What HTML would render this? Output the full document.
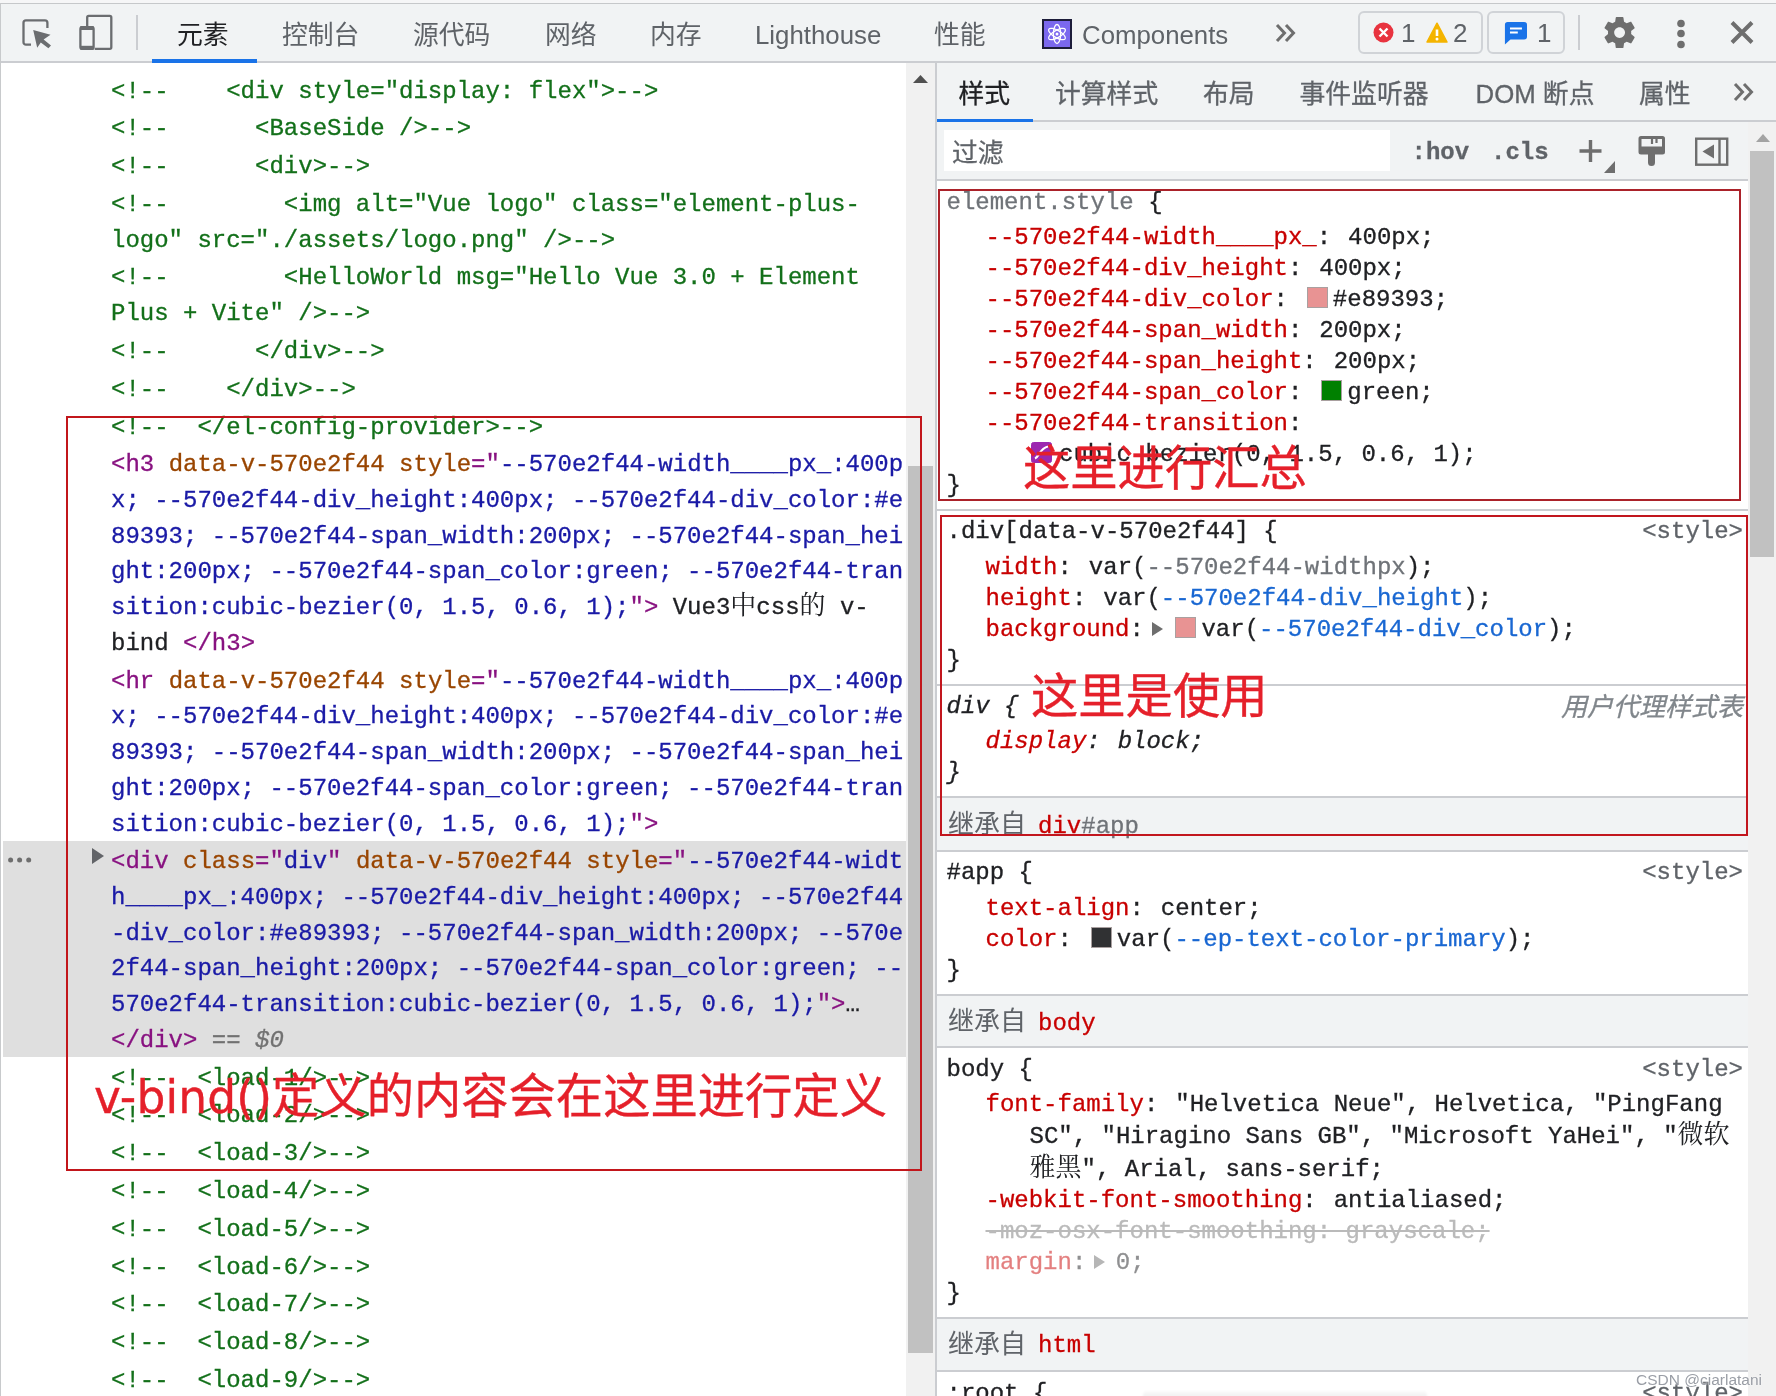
<!DOCTYPE html>
<html lang="zh-CN">
<head>
<meta charset="utf-8">
<title>DevTools</title>
<style>
html,body{margin:0;padding:0;}
body{width:1776px;height:1396px;overflow:hidden;position:relative;background:#fff;
  font-family:"Liberation Sans","Noto Sans CJK SC",sans-serif;color:#202124;}
.abs{position:absolute;}
/* ---------- top toolbar ---------- */
#topbar{left:0;top:0;width:1776px;height:61px;background:#f1f3f4;border-bottom:2px solid #cbcdd1;}
#topline{left:0;top:3px;width:1776px;height:1px;background:#c6c8ca;}
#topwhite{left:0;top:0;width:1776px;height:3px;background:#f6f6f7;}
#leftline{left:0;top:3px;width:1px;height:1393px;background:#c8cacc;}
.tab{position:absolute;top:14.700px;height:40px;line-height:40px;font-size:25.8px;color:#5f6368;white-space:nowrap;}
.tab.on{color:#202124;}
.vdiv{position:absolute;width:2px;background:#cbcdd1;}
.badge{position:absolute;top:11px;height:43px;border:2px solid #d0d3d7;border-radius:6px;box-sizing:border-box;}
.badge span{position:absolute;top:0;font-size:26px;line-height:40px;color:#5f6368;}
/* ---------- left DOM tree ---------- */
#left{left:0;top:63px;width:906px;height:1333px;background:#fff;overflow:hidden;}
.mono{font-family:"Liberation Mono","Noto Sans CJK SC",monospace;font-size:24px;-webkit-text-stroke:0.3px currentColor;}
#tree{position:absolute;left:0;top:9.300px;width:906px;}
.node{position:relative;padding:1.300px 0 0.800px 111px;white-space:pre;line-height:35.7px;}
.node.sel{margin-left:3px;padding-left:108px;}
#selbg{position:absolute;left:3px;top:778px;width:903px;height:215.800px;background:#dfdfdf;}
.c{color:#13701a;}
.t{color:#881280;}
.an{color:#994500;}
.av{color:#1a1aa6;}
.tx{color:#202124;}
.eq{color:#727272;font-style:italic;}
.dots{position:absolute;left:5px;top:13.700px;width:26px;height:6px;}
.arrow{position:absolute;left:89px;top:5px;width:0;height:0;border-left:12px solid #626468;border-top:8px solid transparent;border-bottom:8px solid transparent;}
#lscroll{left:906px;top:63px;width:29px;height:1333px;background:#f1f1f1;}
#lthumb{left:908px;top:466px;width:25px;height:887px;background:#c1c1c1;}
#vsplit{left:935px;top:63px;width:2px;height:1333px;background:#cbcdd1;}
/* ---------- right styles pane ---------- */
#right{left:937px;top:63px;width:839px;height:1333px;background:#fff;overflow:hidden;}
.p{color:#c80000;}
.v{color:#202124;}
.lk{color:#1967d2;}
.g{color:#6f7378;}
.sw{display:inline-block;width:19px;height:19px;border:1px solid #a9a0a0;vertical-align:-2px;margin:0 5px 0 2px;box-sizing:content-box;}
.line{position:absolute;white-space:pre;line-height:32px;height:32px;left:9.5px;}
.src{position:absolute;white-space:pre;line-height:32px;height:32px;right:33px;color:#5f6368;}
.col{margin-right:2.500px;}
.sep{position:absolute;left:0;width:811px;background:#f1f3f4;border-top:2px solid #cbcdd1;border-bottom:2px solid #cbcdd1;box-sizing:border-box;}
.hr{position:absolute;left:0;width:811px;height:2px;background:#cbcdd1;}
.red{position:absolute;border:2px solid #e0202a;box-sizing:border-box;}
.note{position:absolute;color:#e5202a;white-space:nowrap;font-size:47.300px;font-weight:400;-webkit-text-stroke:0.35px #e5202a;line-height:56px;font-family:"Liberation Sans","Noto Sans CJK SC",sans-serif;}

.ind{padding-left:39px;}
.ind2{padding-left:83px;}
.it{font-style:italic;}
.tri{display:inline-block;width:0;height:0;border-left:11px solid #6e6e6e;border-top:7px solid transparent;border-bottom:7px solid transparent;margin:0 10.500px 0 5.500px;vertical-align:0px;}
.hov{font-family:"Liberation Mono",monospace;font-weight:bold;font-size:24px;line-height:40px;color:#5f6368;}
.inh{position:absolute;left:11px;white-space:pre;line-height:32px;height:32px;font-size:24px;}
.inhl{position:relative;top:0.5px;line-height:0;margin-right:-2.400px;-webkit-text-stroke:0;font-family:"Liberation Sans","Noto Sans CJK SC",sans-serif;font-size:26px;color:#5f6368;}
.strike{color:#bababa;text-decoration:line-through;}
.dim{opacity:.5;}
.ua{font-style:italic;font-family:"Liberation Sans","Noto Sans CJK SC",sans-serif;font-size:26px;color:#80868b;}
.bez{background:#9c27b0;border-color:#9c27b0;border-radius:2.500px;margin:0 7.500px 0 1px;position:relative;}
.cjk{font-family:"Noto Serif CJK SC",serif;font-size:26px;line-height:0;-webkit-text-stroke:0;}
#right .tab{font-family:"Liberation Sans","Noto Sans CJK SC",sans-serif;}
</style>
</head>
<body>
<div id="wrap" style="position:absolute;left:0;top:0;width:1776px;height:1396px;will-change:transform">
<div id="topbar" class="abs"></div>
<div id="topwhite" class="abs"></div>
<div id="topline" class="abs"></div>
<!-- inspect + device icons -->
<svg class="abs" style="left:0;top:0" width="140" height="62" viewBox="0 0 140 62">
  <path d="M31 44.700H26a2.500 2.500 0 0 1-2.500-2.500V22.800a2.500 2.500 0 0 1 2.500-2.500H44.900a2.500 2.500 0 0 1 2.500 2.500V28" fill="none" stroke="#6b6d70" stroke-width="2.300"/>
  <path d="M33.200 29.900L50.500 34.800 43.600 39.600 51 45.400 48.400 48.200 40.800 42.600 37.200 47.800z" fill="#6b6d70"/>
  <path d="M87.200 26V17.400a1.500 1.500 0 0 1 1.500-1.500H109.800a1.500 1.500 0 0 1 1.500 1.500V47.300a1.500 1.500 0 0 1-1.500 1.500H94.700" fill="none" stroke="#6b6d70" stroke-width="2.300"/>
  <rect x="80.400" y="27.100" width="13.200" height="21.700" rx="1.800" fill="none" stroke="#6b6d70" stroke-width="2.300"/>
  <rect x="80.400" y="26" width="13.200" height="4" fill="#6b6d70"/>
  <rect x="80.400" y="45.800" width="13.200" height="4.100" fill="#6b6d70"/>
</svg>
<div class="vdiv" style="left:136px;top:15px;height:35px"></div>
<div class="tab on" style="left:177px">元素</div>
<div class="abs" style="left:152px;top:59px;width:105px;height:4px;background:#1a73e8"></div>
<div class="tab" style="left:282px">控制台</div>
<div class="tab" style="left:413px">源代码</div>
<div class="tab" style="left:545px">网络</div>
<div class="tab" style="left:650px">内存</div>
<div class="tab" style="left:755px">Lighthouse</div>
<div class="tab" style="left:934px">性能</div>
<!-- react icon -->
<svg class="abs" style="left:1042px;top:19px" width="30" height="30" viewBox="0 0 30 30">
  <rect x="1" y="1" width="28" height="28" fill="#7b68ee" stroke="#1d1d3a" stroke-width="2"/>
  <g fill="none" stroke="#fff" stroke-width="1.300">
    <ellipse cx="15" cy="15" rx="3.600" ry="9.500"/>
    <ellipse cx="15" cy="15" rx="3.600" ry="9.500" transform="rotate(60 15 15)"/>
    <ellipse cx="15" cy="15" rx="3.600" ry="9.500" transform="rotate(120 15 15)"/>
  </g>
  <circle cx="15" cy="15" r="1.500" fill="#fff"/>
</svg>
<div class="tab" style="left:1082px">Components</div>
<svg class="abs" style="left:1274px;top:22px" width="24" height="22" viewBox="0 0 24 22">
  <path d="M3 3l7.5 8L3 19M12 3l7.5 8-7.5 8" fill="none" stroke="#6e6e6e" stroke-width="3"/>
</svg>
<!-- badges -->
<div class="badge" style="left:1358px;width:125px">
  <svg style="position:absolute;left:13px;top:9px" width="21" height="21" viewBox="0 0 21 21"><circle cx="10.5" cy="10.5" r="10" fill="#e8333f"/><path d="M6.5 6.5l8 8M14.500 6.5l-8 8" stroke="#fff" stroke-width="2.4"/></svg>
  <span style="left:41px">1</span>
  <svg style="position:absolute;left:66px;top:9px" width="22" height="21" viewBox="0 0 22 21"><path d="M11 1.2L21 20H1z" fill="#f4b400" stroke="#f4b400" stroke-width="1.5" stroke-linejoin="round"/><path d="M11 7.5v6.500" stroke="#fff" stroke-width="2.6"/><circle cx="11" cy="17" r="1.5" fill="#fff"/></svg>
  <span style="left:93px">2</span>
</div>
<div class="badge" style="left:1487px;width:78px">
  <svg style="position:absolute;left:15px;top:8px" width="23" height="24" viewBox="0 0 25 26"><path d="M4 1h18a3 3 0 0 1 3 3v13a3 3 0 0 1-3 3H7l-6 5.500V4a3 3 0 0 1 3-3z" fill="#1a73e8"/><path d="M6.500 8h13M6.500 12.500h8.500" stroke="#fff" stroke-width="2.2"/></svg>
  <span style="left:48px">1</span>
</div>
<div class="vdiv" style="left:1578px;top:15px;height:35px"></div>
<!-- gear -->
<svg class="abs" style="left:1600.900px;top:13.900px" width="37.200" height="37.200" viewBox="0 0 24 24">
  <path fill="#6e6e6e" d="M19.43 12.980c.04-.32.070-.64.070-.98s-.03-.66-.07-.98l2.110-1.650c.19-.15.240-.42.120-.64l-2-3.460c-.12-.22-.39-.3-.61-.22l-2.490 1c-.52-.4-1.080-.73-1.690-.98l-.38-2.650C14.460 2.180 14.250 2 14 2h-4c-.25 0-.46.180-.49.420l-.38 2.650c-.61.250-1.170.59-1.690.98l-2.490-1c-.23-.09-.49 0-.61.220l-2 3.460c-.13.220-.07.490.12.640l2.110 1.650c-.04.320-.07.650-.07.980s.03.660.07.980l-2.110 1.650c-.19.150-.24.420-.12.640l2 3.460c.12.220.39.300.61.220l2.490-1c.52.400 1.080.73 1.690.98l.38 2.650c.03.240.24.420.49.420h4c.25 0 .46-.18.490-.42l.38-2.650c.61-.25 1.170-.59 1.690-.98l2.490 1c.23.090.49 0 .61-.22l2-3.460c.12-.22.070-.49-.12-.64l-2.110-1.650zM12 15.500c-1.930 0-3.500-1.570-3.500-3.500s1.570-3.500 3.500-3.500 3.500 1.570 3.500 3.500-1.570 3.500-3.500 3.500z"/>
</svg>
<!-- kebab -->
<svg class="abs" style="left:1676px;top:18px" width="10" height="32" viewBox="0 0 10 32"><circle cx="5" cy="5.500" r="3.800" fill="#6e6e6e"/><circle cx="5" cy="15.500" r="3.800" fill="#6e6e6e"/><circle cx="5" cy="26.500" r="3.800" fill="#6e6e6e"/></svg>
<!-- close -->
<svg class="abs" style="left:1729px;top:20px" width="26" height="25" viewBox="0 0 26 25"><path d="M3 2.500l20 20M23 2.500l-20 20" stroke="#6e6e6e" stroke-width="4"/></svg>
<div id="left" class="abs mono"><div id="selbg"></div><div id="tree">
<div class="node"><span class="c">&lt;!--    &lt;div style=&quot;display: flex&quot;&gt;--&gt;</span></div>
<div class="node"><span class="c">&lt;!--      &lt;BaseSide /&gt;--&gt;</span></div>
<div class="node"><span class="c">&lt;!--      &lt;div&gt;--&gt;</span></div>
<div class="node"><span class="c">&lt;!--        &lt;img alt=&quot;Vue logo&quot; class=&quot;element-plus-</span>
<span class="c">logo&quot; src=&quot;./assets/logo.png&quot; /&gt;--&gt;</span></div>
<div class="node"><span class="c">&lt;!--        &lt;HelloWorld msg=&quot;Hello Vue 3.0 + Element</span>
<span class="c">Plus + Vite&quot; /&gt;--&gt;</span></div>
<div class="node"><span class="c">&lt;!--      &lt;/div&gt;--&gt;</span></div>
<div class="node"><span class="c">&lt;!--    &lt;/div&gt;--&gt;</span></div>
<div class="node"><span class="c">&lt;!--  &lt;/el-config-provider&gt;--&gt;</span></div>
<div class="node"><span class="t">&lt;h3</span> <span class="an">data-v-570e2f44</span> <span class="an">style</span><span class="t">=&quot;</span><span class="av">--570e2f44-width____px_:400p</span>
<span class="av">x; --570e2f44-div_height:400px; --570e2f44-div_color:#e</span>
<span class="av">89393; --570e2f44-span_width:200px; --570e2f44-span_hei</span>
<span class="av">ght:200px; --570e2f44-span_color:green; --570e2f44-tran</span>
<span class="av">sition:cubic-bezier(0, 1.5, 0.6, 1);</span><span class="t">&quot;&gt;</span> <span class="tx">Vue3<span class="cjk">中</span>css<span class="cjk">的</span> v-</span>
<span class="tx">bind </span><span class="t">&lt;/h3&gt;</span></div>
<div class="node"><span class="t">&lt;hr</span> <span class="an">data-v-570e2f44</span> <span class="an">style</span><span class="t">=&quot;</span><span class="av">--570e2f44-width____px_:400p</span>
<span class="av">x; --570e2f44-div_height:400px; --570e2f44-div_color:#e</span>
<span class="av">89393; --570e2f44-span_width:200px; --570e2f44-span_hei</span>
<span class="av">ght:200px; --570e2f44-span_color:green; --570e2f44-tran</span>
<span class="av">sition:cubic-bezier(0, 1.5, 0.6, 1);</span><span class="t">&quot;&gt;</span></div>
<div class="node sel"><svg class="dots" viewBox="0 0 26 6"><circle cx="2.600" cy="3" r="2.500" fill="#6e6e6e"/><circle cx="11.600" cy="3" r="2.500" fill="#6e6e6e"/><circle cx="20.700" cy="3" r="2.500" fill="#6e6e6e"/></svg><span class="arrow"></span><span class="t">&lt;div</span> <span class="an">class</span><span class="t">=&quot;</span><span class="av">div</span><span class="t">&quot;</span> <span class="an">data-v-570e2f44</span> <span class="an">style</span><span class="t">=&quot;</span><span class="av">--570e2f44-widt</span>
<span class="av">h____px_:400px; --570e2f44-div_height:400px; --570e2f44</span>
<span class="av">-div_color:#e89393; --570e2f44-span_width:200px; --570e</span>
<span class="av">2f44-span_height:200px; --570e2f44-span_color:green; --</span>
<span class="av">570e2f44-transition:cubic-bezier(0, 1.5, 0.6, 1);</span><span class="t">&quot;&gt;</span><span class="tx">…</span>
<span class="t">&lt;/div&gt;</span><span class="eq"> == $0</span></div>
<div class="node"><span class="c">&lt;!--  &lt;load-1/&gt;--&gt;</span></div>
<div class="node"><span class="c">&lt;!--  &lt;load-2/&gt;--&gt;</span></div>
<div class="node"><span class="c">&lt;!--  &lt;load-3/&gt;--&gt;</span></div>
<div class="node"><span class="c">&lt;!--  &lt;load-4/&gt;--&gt;</span></div>
<div class="node"><span class="c">&lt;!--  &lt;load-5/&gt;--&gt;</span></div>
<div class="node"><span class="c">&lt;!--  &lt;load-6/&gt;--&gt;</span></div>
<div class="node"><span class="c">&lt;!--  &lt;load-7/&gt;--&gt;</span></div>
<div class="node"><span class="c">&lt;!--  &lt;load-8/&gt;--&gt;</span></div>
<div class="node"><span class="c">&lt;!--  &lt;load-9/&gt;--&gt;</span></div>
</div></div>
<div id="lscroll" class="abs"></div>
<svg class="abs" style="left:913px;top:75px" width="15" height="8" viewBox="0 0 15 8"><path d="M7.500 0L15 8H0z" fill="#505050"/></svg>
<div id="lthumb" class="abs"></div>
<div id="vsplit" class="abs"></div>
<div id="right" class="abs mono">
<div class="abs" style="left:0;top:0;width:839px;height:57px;background:#f1f3f4;border-bottom:2px solid #cbcdd1"></div>
<div class="tab on" style="left:21.5px;top:10.700px">样式</div>
<div class="tab" style="left:118.0px;top:10.700px">计算样式</div>
<div class="tab" style="left:266.0px;top:10.700px">布局</div>
<div class="tab" style="left:362.5px;top:10.700px">事件监听器</div>
<div class="tab" style="left:538.5px;top:10.700px">DOM 断点</div>
<div class="tab" style="left:702.0px;top:10.700px">属性</div>
<div class="abs" style="left:0;top:55.500px;width:96px;height:3.500px;background:#1a73e8"></div>
<svg class="abs" style="left:795px;top:18px" width="24" height="22" viewBox="0 0 24 22"><path d="M3 3l7.500 8L3 19M12 3l7.500 8-7.500 8" fill="none" stroke="#6e6e6e" stroke-width="3"/></svg>
<div class="abs" style="left:0;top:59px;width:811px;height:57px;background:#f1f3f4;border-bottom:2px solid #cbcdd1"></div>
<div class="abs" style="left:7px;top:66.500px;width:446px;height:41.500px;background:#fff"></div>
<div class="abs" style="left:15px;top:69.500px;font-size:25.800px;line-height:40px;color:#5f6368;font-family:'Liberation Sans','Noto Sans CJK SC',sans-serif">过滤</div>
<div class="abs hov" style="left:474.500px;top:70px">:hov</div>
<div class="abs hov" style="left:554px;top:70px">.cls</div>
<svg class="abs" style="left:641px;top:76px" width="38" height="36" viewBox="0 0 38 36"><path d="M12.500 1v22M1.500 12h22" stroke="#6e6e6e" stroke-width="3.400" fill="none"/><path d="M37 22v12H26z" fill="#6e6e6e"/></svg>
<svg class="abs" style="left:700px;top:72px" width="30" height="32" viewBox="0 0 30 32"><path d="M3.500 1h22a2.500 2.500 0 0 1 2.500 2.500V17a2.500 2.500 0 0 1-2.500 2.500H18v8a3.500 3.500 0 0 1-7 0V19.500H4a2.500 2.500 0 0 1-2.500-2.500V3.500A2.500 2.500 0 0 1 4 1z" fill="#6e6e6e"/><path d="M4.500 4h20.500v7.500H4.500z" fill="#f1f3f4"/><path d="M15 4v5M19.500 4v4" stroke="#6e6e6e" stroke-width="2.200"/></svg>
<svg class="abs" style="left:757px;top:74px" width="36" height="30" viewBox="0 0 36 30"><rect x="2.200" y="1.700" width="31" height="26" fill="none" stroke="#6e6e6e" stroke-width="2.400"/><path d="M25.500 2v26" stroke="#6e6e6e" stroke-width="2.400"/><path d="M20 7.500v14L8.500 14.500z" fill="#6e6e6e"/></svg>
<div class="abs" style="left:811px;top:59px;width:28px;height:1274px;background:#f1f1f1"></div>
<svg class="abs" style="left:819px;top:71px" width="14" height="8" viewBox="0 0 14 8"><path d="M7 0l7 8H0z" fill="#a3a3a3"/></svg>
<div class="abs" style="left:813.300px;top:88px;width:24px;height:405.700px;background:#c1c1c1"></div>
<div class="line " style="top:123.6px;"><span class="g">element.style</span><span class="v"> {</span></div>
<div class="line ind" style="top:158.8px;"><span class="p">--570e2f44-width____px_</span><span class="v col">:</span><span class="v"> 400px;</span></div>
<div class="line ind" style="top:190.1px;"><span class="p">--570e2f44-div_height</span><span class="v col">:</span><span class="v"> 400px;</span></div>
<div class="line ind" style="top:221.1px;"><span class="p">--570e2f44-div_color</span><span class="v col">:</span><span class="v"> </span><span class="sw" style="background:#e89393"></span><span class="v">#e89393;</span></div>
<div class="line ind" style="top:252.4px;"><span class="p">--570e2f44-span_width</span><span class="v col">:</span><span class="v"> 200px;</span></div>
<div class="line ind" style="top:283.1px;"><span class="p">--570e2f44-span_height</span><span class="v col">:</span><span class="v"> 200px;</span></div>
<div class="line ind" style="top:313.9px;"><span class="p">--570e2f44-span_color</span><span class="v col">:</span><span class="v"> </span><span class="sw" style="background:green"></span><span class="v">green;</span></div>
<div class="line ind" style="top:345.1px;"><span class="p">--570e2f44-transition</span><span class="v col">:</span><span class="v"></span></div>
<div class="line ind2" style="top:376.1px;"><span class="sw bez"><svg style="position:absolute;left:0;top:0" width="19" height="19" viewBox="0 0 19 19"><path d="M3 15.500C7 14 8 5 16 3.500" fill="none" stroke="#fff" stroke-width="2.200"/></svg></span><span class="v">cubic-bezier(0, 1.5, 0.6, 1);</span></div>
<div class="line " style="top:407.1px;"><span class="v">}</span></div>
<div class="hr" style="top:446.0px"></div>
<div class="line " style="top:452.6px;"><span class="v">.div[data-v-570e2f44] {</span></div>
<div class="src " style="top:452.6px">&lt;style&gt;</div>
<div class="line ind" style="top:488.9px;"><span class="p">width</span><span class="v col">:</span><span class="v"> var(</span><span class="g">--570e2f44-widthpx</span><span class="v">);</span></div>
<div class="line ind" style="top:520.0px;"><span class="p">height</span><span class="v col">:</span><span class="v"> var(</span><span class="lk">--570e2f44-div_height</span><span class="v">);</span></div>
<div class="line ind" style="top:551.0px;"><span class="p">background</span><span class="v col">:</span><span class="tri"></span><span class="sw" style="background:#e89393"></span><span class="v">var(</span><span class="lk">--570e2f44-div_color</span><span class="v">);</span></div>
<div class="line " style="top:582.1px;"><span class="v">}</span></div>
<div class="hr" style="top:621.0px"></div>
<div class="line it" style="top:627.5px;"><span class="v">div {</span></div>
<div class="src ua" style="top:627.8px">用户代理样式表</div>
<div class="line ind it" style="top:662.5px;"><span class="p">display</span><span class="v col">:</span><span class="v"> block;</span></div>
<div class="line it" style="top:693.5px;"><span class="v">}</span></div>
<div class="sep" style="top:732.7px;height:56.3px"></div>
<div class="inh" style="top:747.5px"><span class="inhl">继承自</span> <span class="p">div</span><span class="g">#app</span></div>
<div class="line " style="top:793.9px;"><span class="v">#app {</span></div>
<div class="src " style="top:793.9px">&lt;style&gt;</div>
<div class="line ind" style="top:829.6px;"><span class="p">text-align</span><span class="v col">:</span><span class="v"> center;</span></div>
<div class="line ind" style="top:860.6px;"><span class="p">color</span><span class="v col">:</span><span class="v"> </span><span class="sw" style="background:#303133"></span><span class="v">var(</span><span class="lk">--ep-text-color-primary</span><span class="v">);</span></div>
<div class="line " style="top:891.6px;"><span class="v">}</span></div>
<div class="sep" style="top:931.2px;height:54.3px"></div>
<div class="inh" style="top:944.6px"><span class="inhl">继承自</span> <span class="p">body</span></div>
<div class="line " style="top:990.8px;"><span class="v">body {</span></div>
<div class="src " style="top:990.8px">&lt;style&gt;</div>
<div class="line ind" style="top:1025.8px;"><span class="p">font-family</span><span class="v col">:</span><span class="v"> "Helvetica Neue", Helvetica, "PingFang</span></div>
<div class="line ind2" style="top:1058.3px;"><span class="v">SC", "Hiragino Sans GB", "Microsoft YaHei", "</span><span class="cjk">微软</span></div>
<div class="line ind2" style="top:1090.9px;"><span class="cjk">雅黑</span><span class="v">", Arial, sans-serif;</span></div>
<div class="line ind" style="top:1121.8px;"><span class="p">-webkit-font-smoothing</span><span class="v col">:</span><span class="v"> antialiased;</span></div>
<div class="line ind" style="top:1152.7px;"><span class="strike">-moz-osx-font-smoothing: grayscale;</span></div>
<div class="line ind" style="top:1183.6px;"><span class="dim"><span class="p">margin</span><span class="v col">:</span><span class="tri"></span><span class="v">0;</span></span></div>
<div class="line " style="top:1215.1px;"><span class="v">}</span></div>
<div class="sep" style="top:1253.5px;height:55.5px"></div>
<div class="inh" style="top:1267.2px"><span class="inhl">继承自</span> <span class="p">html</span></div>
<div class="line " style="top:1315.1px;"><span class="v">:root {</span></div>
<div class="src " style="top:1315.1px">&lt;style&gt;</div>
</div>
<div id="leftline" class="abs"></div>
<div class="red" style="left:66px;top:416px;width:856px;height:755px;border-color:#c2161b"></div>
<div class="red" style="left:938px;top:189px;width:803px;height:312px;border-color:#ab222a"></div>
<div class="red" style="left:940px;top:515px;width:808px;height:321px;border-color:#c2161e"></div>
<div class="note" style="left:1023px;top:441px">这里进行汇总</div>
<div class="note" style="left:1031px;top:669px">这里是使用</div>
<div class="note" style="left:94px;top:1069px"><span style="font-family:'DejaVu Sans',sans-serif;font-size:45.500px;letter-spacing:0.150px">v-bind()</span>定义的内容会在这里进行定义</div>
<div class="abs" style="left:1636px;top:1371px;font-size:15.500px;line-height:18px;color:#9a9ea6;text-shadow:0 0 2px #fff;white-space:nowrap">CSDN @ciarlatani</div>
<div id="botshadow" class="abs" style="left:1143px;top:1391px;width:284px;height:8px;border-radius:4px 4px 0 0;background:linear-gradient(to bottom,rgba(0,0,0,0.02),rgba(0,0,0,0.07));filter:blur(1px)"></div>
</div>
</body>
</html>
